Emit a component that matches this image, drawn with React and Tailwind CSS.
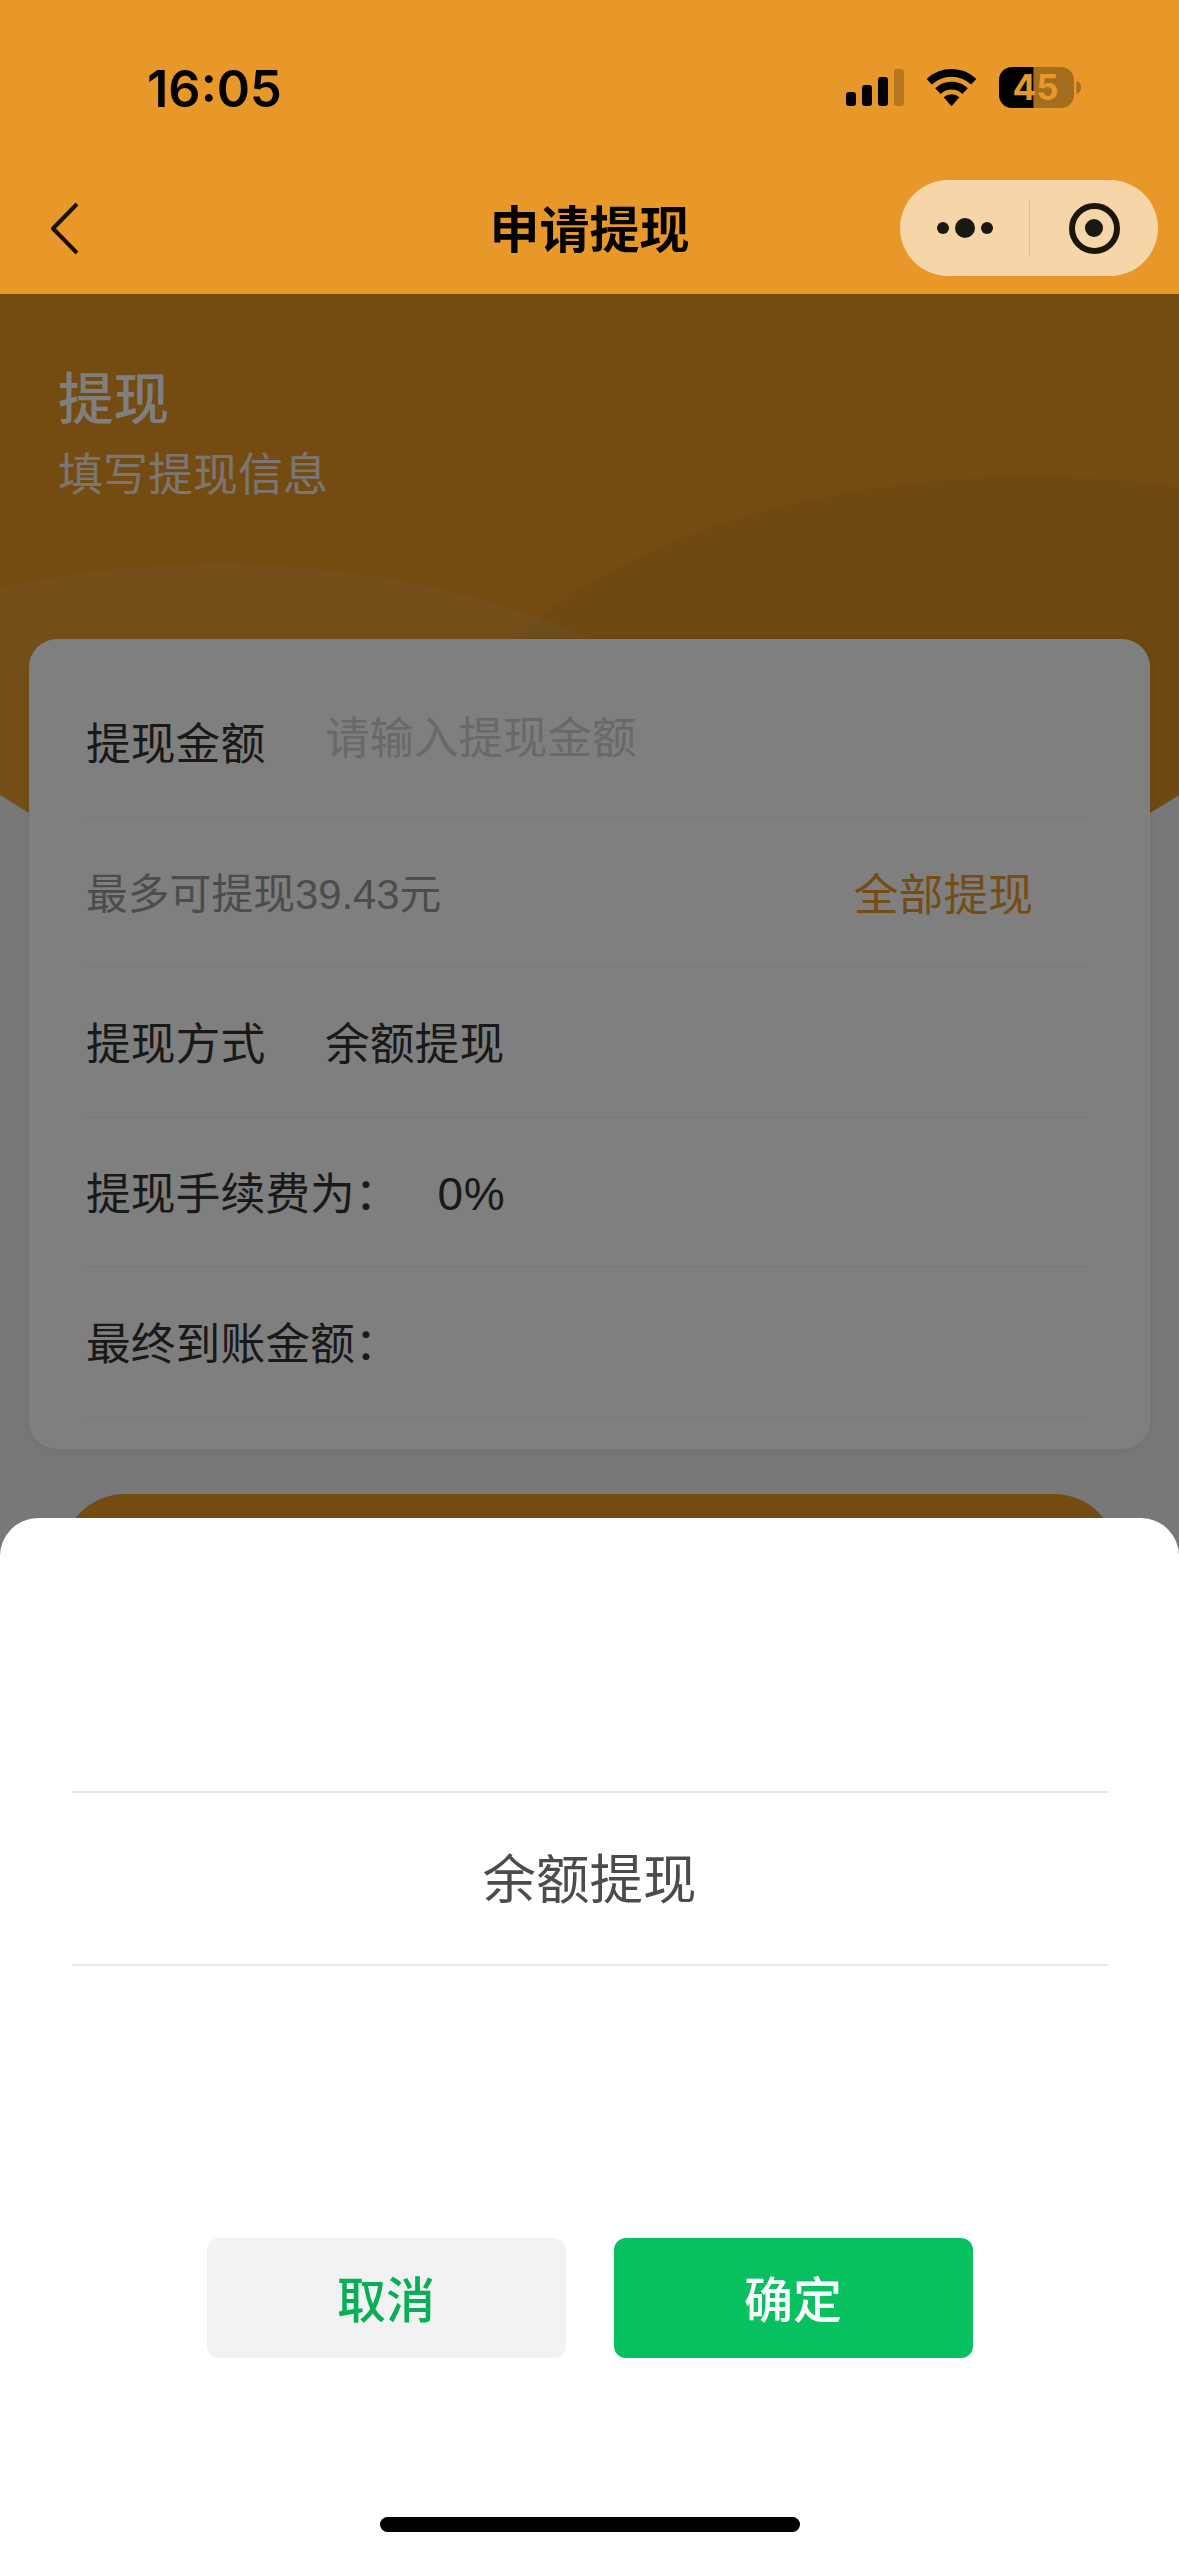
import React, { useState } from 'react';

const StatusIcons = () => (
  <svg className="w-[240px] h-[48px]" viewBox="844 64 240 48" fill="none">
    {/* signal */}
    <rect x="846" y="92" width="10" height="14" rx="3" fill="#000" />
    <rect x="862" y="85" width="10" height="21" rx="3" fill="#000" />
    <rect x="878" y="77" width="10" height="29" rx="3" fill="#000" />
    <rect x="894" y="69" width="10" height="37" rx="3" fill="#000" fillOpacity="0.22" />
    {/* wifi */}
    <path d="M951.5 69c9.6 0 18.3 3.700 24.800 9.900l-5.200 5.600a28.500 28.500 0 0 0-39.200 0l-5.200-5.600A36 36 0 0 1 951.500 69z" fill="#000" />
    <path d="M951.500 81.800c6.300 0 12 2.400 16.300 6.400l-5.500 5.700a15.600 15.600 0 0 0-21.600 0l-5.500-5.700a23.800 23.800 0 0 1 16.300-6.400z" fill="#000" />
    <path d="M951.500 94.300c3 0 5.700 1.100 7.800 2.900l-7.800 9-7.800-9a12 12 0 0 1 7.800-2.900z" fill="#000" />
    {/* battery */}
    <path d="M1033.500 67H1061a13 13 0 0 1 13 13v15a13 13 0 0 1-13 13h-27.500z" fill="#a36e1e" />
    <path d="M1033.500 67H1012a13 13 0 0 0-13 13v15a13 13 0 0 0 13 13h21.500z" fill="#000" />
    <path d="M1076.500 81c3 1 4.500 3.500 4.500 6.500s-1.500 5.500-4.500 6.500z" fill="#a36e1e" />
    <text x="1035.500" y="100" textAnchor="middle" fontFamily="Inter, sans-serif" fontWeight="700" fontSize="35" fill="#e89828">45</text>
  </svg>
);

const Capsule = () => (
  <div className="flex items-center w-[258px] h-24 rounded-full bg-[#f6d5a8]">
    <div className="flex items-center justify-center gap-[6px] w-[129px] pl-px">
      <span className="size-3 rounded-full bg-[#1a1812]" />
      <span className="size-[20px] rounded-full bg-[#1a1812]" />
      <span className="size-3 rounded-full bg-[#1a1812]" />
    </div>
    <div className="w-px h-14 bg-[#e6c08c]" />
    <div className="flex flex-1 items-center justify-center">
      <div className="flex items-center justify-center size-[51px] rounded-full border-[6px] border-[#1e1509]">
        <span className="size-[18px] rounded-full bg-[#1a1812]" />
      </div>
    </div>
  </div>
);

const HeroWaves = () => (
  <svg className="absolute top-0 left-0 w-full h-[700px]" viewBox="0 0 1179 700">
    <defs>
      <clipPath id="hero">
        <path d="M0 0H1179V501Q589.500 878 0 501Z" />
      </clipPath>
    </defs>
    <g clipPath="url(#hero)">
      <rect width="1179" height="700" fill="#e89622" />
      <ellipse cx="1032" cy="503" rx="595" ry="320" fill="#dc9224" />
      <ellipse cx="218" cy="635" rx="615" ry="365" fill="#fff" fillOpacity="0.08" />
    </g>
  </svg>
);

const Row = ({ label, children }) => (
  <div className="flex items-center h-[150px] pt-[4px] border-b-2 border-[#f6f6f6] text-[44.800px] text-[#333]">
    <span className="min-w-[239px] pr-[38px] whitespace-nowrap">{label}</span>
    {children}
  </div>
);

const App = () => {
  const [amount, setAmount] = useState('');
  const balance = '39.43';
  const method = '余额提现';

  return (
    <div className="flex flex-col w-[1179px] h-[2556px] overflow-hidden bg-[#f0f0f0] font-['Liberation_Sans','Noto_Sans_CJK_SC',sans-serif] leading-none">
      <header className="h-[294px] shrink-0 bg-[#e89828]">
        <div className="flex items-center justify-between h-[176px] pl-[147px] pr-[95px]">
          <span className="pt-[2px] font-['Inter',sans-serif] font-semibold text-[50.500px] text-black">16:05</span>
          <StatusIcons />
        </div>
        <div className="grid grid-cols-[1fr_auto_1fr] items-center h-[104px]">
          <svg className="w-8 h-14 ml-[49px]" viewBox="0 0 32 56" fill="none" stroke="#1a1005" strokeWidth="4">
            <path d="M28 4L4 28.500L28 53" strokeLinejoin="round" />
          </svg>
          <h1 className="pt-[6px] text-[50px] font-bold text-black">申请提现</h1>
          <div className="flex justify-end pr-[21px]">
            <Capsule />
          </div>
        </div>
      </header>

      <main className="relative flex-1">
        <HeroWaves />
        <section className="relative h-[345px] pt-[79px] pl-[58px] text-white">
          <h2 className="text-[55.500px] font-medium">提现</h2>
          <p className="mt-[24px] text-[45px] text-[#f4eee6]">填写提现信息</p>
        </section>

        <section className="relative mx-[29px] h-[810px] rounded-[28px] bg-white pt-[29px] pl-[57px] pr-[62px] shadow-[0_2px_12px_rgba(0,0,0,0.06)]">
          <Row label="提现金额">
            <input
              className="w-[600px] pb-[10px] outline-none text-[44.500px] placeholder:text-[#d2d2d2]"
              placeholder="请输入提现金额"
              value={amount}
              onChange={(e) => setAmount(e.target.value)}
            />
          </Row>
          <div className="flex items-center justify-between h-[150px] pt-[6px] border-b-2 border-[#f6f6f6]">
            <span className="text-[41.800px] text-[#999]">最多可提现{balance}元</span>
            <button className="mr-[55px] text-[44.800px] text-[#e89828]" onClick={() => setAmount(balance)}>全部提现</button>
          </div>
          <Row label="提现方式">
            <span>{method}</span>
          </Row>
          <Row label="提现手续费为：">
            <span className="text-[46px] tracking-[0.500px]">0%</span>
          </Row>
          <Row label="最终到账金额：" />
        </section>

        <button className="relative block mx-[62px] mt-[45px] w-[1055px] h-[126px] rounded-full bg-[#e89622] text-[51px] text-white">提交</button>

        {/* mask */}
        <div className="absolute inset-0 bg-black/50" />

        {/* picker sheet */}
        <div className="absolute inset-x-0 bottom-0 flex flex-col items-center h-[1038px] rounded-t-[38px] bg-white">
          <div className="flex items-center justify-center mt-[273px] w-[1036px] h-[175px] pt-[4px] border-y-2 border-[#e8e8e8]">
            <span className="text-[53.500px] text-[#4c4c4c]">{method}</span>
          </div>
          <div className="flex gap-12 mt-[272px] text-[49px] font-medium">
            <button className="w-[359px] h-[120px] pt-[6px] rounded-xl bg-[#f2f2f2] text-[#06ae56]">取消</button>
            <button className="w-[359px] h-[120px] pt-[6px] rounded-xl bg-[#07c160] text-white">确定</button>
          </div>
          <div className="mt-[159px] w-[420px] h-[15px] rounded-full bg-black" />
        </div>
      </main>
    </div>
  );
};

export default App;
